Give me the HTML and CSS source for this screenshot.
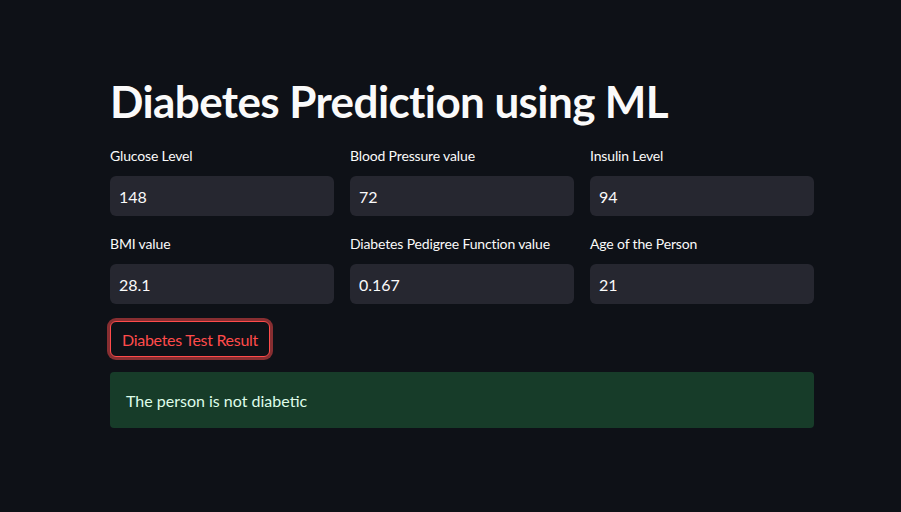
FILE: index.html
```html
<!DOCTYPE html>
<html lang="en">
<head>
<meta charset="utf-8">
<title>Diabetes Prediction using ML</title>
<link rel="stylesheet" href="styles.css">
</head>
<body>
<main class="block">
  <h1 class="title">Diabetes Prediction using ML</h1>
  <div class="grid">
    <label class="field">
      <span class="label">Glucose Level</span>
      <span class="input">148</span>
    </label>
    <label class="field">
      <span class="label">Blood Pressure value</span>
      <span class="input">72</span>
    </label>
    <label class="field">
      <span class="label">Insulin Level</span>
      <span class="input">94</span>
    </label>
    <label class="field">
      <span class="label">BMI value</span>
      <span class="input">28.1</span>
    </label>
    <label class="field">
      <span class="label">Diabetes Pedigree Function value</span>
      <span class="input">0.167</span>
    </label>
    <label class="field">
      <span class="label">Age of the Person</span>
      <span class="input">21</span>
    </label>
  </div>
  <div class="actions">
    <button class="btn" type="button">Diabetes Test Result</button>
  </div>
  <div class="alert-success">The person is not diabetic</div>
</main>
</body>
</html>
```
FILE: styles.css
```css
* { box-sizing: border-box; }
html, body {
  margin: 0;
  background: #0e1117;
  color: #fafafa;
  font-family: "Lato", "Noto Sans", sans-serif;
}
.block {
  width: 704px;
  margin-left: 110px;
  padding-top: 74px;
}
.title {
  margin: 0;
  font-size: 44px;
  font-weight: 700;
  line-height: 54px;
  letter-spacing: -0.6px;
}
.grid {
  margin-top: 20px;
  display: grid;
  grid-template-columns: repeat(3, 1fr);
  column-gap: 16px;
  row-gap: 20px;
}
.field {
  display: flex;
  flex-direction: column;
}
.label {
  font-size: 14px;
  line-height: 16px;
  height: 20px;
  margin-bottom: 8px;
  letter-spacing: -0.15px;
}
.input {
  height: 40px;
  background: #262730;
  border-radius: 6px;
  padding: 0 9px;
  display: flex;
  align-items: center;
  font-size: 16px;
}
.actions {
  margin-top: 17px;
}
.btn {
  width: 160px;
  height: 36px;
  background: #0e1117;
  color: #ff4b4b;
  border: 1px solid #ff4b4b;
  border-radius: 6px;
  box-shadow: 0 0 0 3px rgba(255, 75, 75, 0.5);
  font-family: inherit;
  font-size: 16px;
  letter-spacing: -0.3px;
  white-space: nowrap;
  padding: 0 4px;
}
.alert-success {
  margin-top: 15px;
  height: 56px;
  background: #173c29;
  color: #dffde9;
  border-radius: 4px;
  padding: 0 16px;
  display: flex;
  align-items: center;
  font-size: 16px;
}
```
